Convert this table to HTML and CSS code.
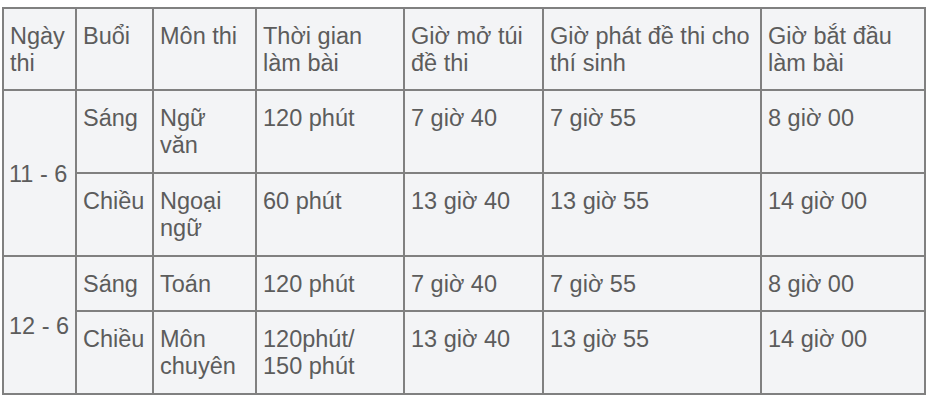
FILE: index.html
```html
<!DOCTYPE html>
<html lang="vi">
<head>
<meta charset="utf-8">
<title>Lịch thi</title>
<link rel="stylesheet" href="styles.css">
</head>
<body>
<table class="schedule">
  <colgroup>
    <col class="c1"><col class="c2"><col class="c3"><col class="c4"><col class="c5"><col class="c6"><col class="c7">
  </colgroup>
  <tr class="r-head">
    <td>Ngày<br>thi</td>
    <td>Buổi</td>
    <td>Môn thi</td>
    <td>Thời gian<br>làm bài</td>
    <td>Giờ mở túi<br>đề thi</td>
    <td>Giờ phát đề thi cho<br>thí sinh</td>
    <td>Giờ bắt đầu<br>làm bài</td>
  </tr>
  <tr class="r-tall">
    <td class="date" rowspan="2">11 - 6</td>
    <td>Sáng</td>
    <td>Ngữ<br>văn</td>
    <td>120 phút</td>
    <td>7 giờ 40</td>
    <td>7 giờ 55</td>
    <td>8 giờ 00</td>
  </tr>
  <tr class="r-tall">
    <td>Chiều</td>
    <td>Ngoại<br>ngữ</td>
    <td>60 phút</td>
    <td>13 giờ 40</td>
    <td>13 giờ 55</td>
    <td>14 giờ 00</td>
  </tr>
  <tr class="r-short">
    <td class="date" rowspan="2">12 - 6</td>
    <td>Sáng</td>
    <td>Toán</td>
    <td>120 phút</td>
    <td>7 giờ 40</td>
    <td>7 giờ 55</td>
    <td>8 giờ 00</td>
  </tr>
  <tr class="r-tall">
    <td>Chiều</td>
    <td>Môn<br>chuyên</td>
    <td>120phút/<br>150 phút</td>
    <td>13 giờ 40</td>
    <td>13 giờ 55</td>
    <td>14 giờ 00</td>
  </tr>
</table>
</body>
</html>
```
FILE: styles.css
```css
html, body {
  margin: 0;
  padding: 0;
  background: #ffffff;
}

body {
  padding: 7px 0 0 2px;
  font-family: "Liberation Sans", Arial, sans-serif;
}

.schedule {
  border-collapse: separate;
  border-spacing: 0;
  table-layout: fixed;
  width: 924px;
  border-top: 2px solid #808080;
  border-left: 2px solid #808080;
  background: #f3f4f6;
}

.c1 { width: 73px; }
.c2 { width: 77px; }
.c3 { width: 103px; }
.c4 { width: 148px; }
.c5 { width: 139px; }
.c6 { width: 218px; }
.c7 { width: 164px; }

.schedule td {
  box-sizing: border-box;
  border-right: 2px solid #808080;
  border-bottom: 2px solid #808080;
  padding: 14px 2px 0 6px;
  vertical-align: top;
  font-size: 23.5px;
  line-height: 27px;
  color: #5c5c5c;
  white-space: nowrap;
  overflow: hidden;
}

.r-head { height: 82px; }
.r-tall { height: 83px; }
.r-short { height: 55px; }

.schedule td.date {
  vertical-align: middle;
  padding-top: 2px;
  padding-left: 5px;
}
```
